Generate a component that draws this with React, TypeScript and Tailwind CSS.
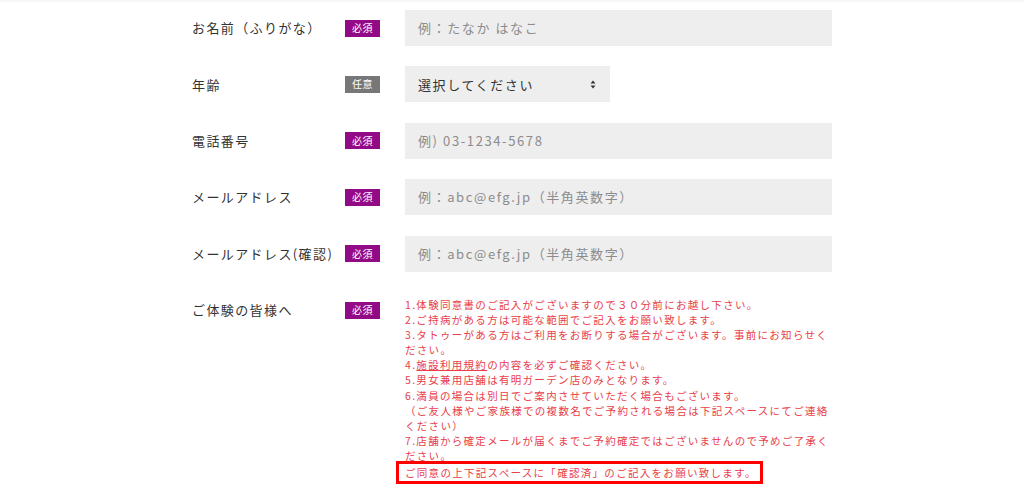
import React from "react";

const font = { fontFamily: '"Noto Sans CJK JP", "Noto Sans", sans-serif' };

function Badge({ required = true }: { required?: boolean }) {
  return (
    <div
      className={`w-[35px] h-[17px] flex items-center justify-center text-[10px] leading-none text-white tracking-[0.5px] ${
        required ? "bg-[#930a87]" : "bg-[#777777]"
      }`}
    >
      {required ? "必須" : "任意"}
    </div>
  );
}

function Row({
  label,
  required = true,
  children,
  alignTop = false,
}: {
  label: string;
  required?: boolean;
  children: React.ReactNode;
  alignTop?: boolean;
}) {
  return (
    <div className={`flex ${alignTop ? "items-start" : "items-center"}`}>
      <div
        className={`w-[153px] shrink-0 text-[13px] tracking-[1.4px] text-[#333333] ${
          alignTop ? "pt-[9px] leading-[18px]" : ""
        }`}
      >
        {label}
      </div>
      <div className={`w-[35px] shrink-0 ${alignTop ? "pt-[10px]" : ""}`}>
        <Badge required={required} />
      </div>
      <div className="ml-[25px] w-[427px]">{children}</div>
    </div>
  );
}

function Input({ placeholder }: { placeholder: string }) {
  return (
    <div className="h-[36px] w-full bg-[#eeeeee] flex items-center pl-[13px] text-[13px] tracking-[1.6px] text-[#8c8c8c]">
      {placeholder}
    </div>
  );
}

export default function App() {
  const notes = [
    "1.体験同意書のご記入がございますので３０分前にお越し下さい。",
    "2.ご持病がある方は可能な範囲でご記入をお願い致します。",
    "3.タトゥーがある方はご利用をお断りする場合がございます。事前にお知らせください。",
  ];
  return (
    <div style={font} className="w-[1024px] h-[492px] bg-white overflow-hidden">
      <div className="h-[3px] bg-gradient-to-b from-[#f3f3f3] to-white" />
      <div className="w-[640px] mx-auto pt-[7px] flex flex-col gap-[20.4px]">
        <Row label="お名前（ふりがな）">
          <Input placeholder="例：たなか はなこ" />
        </Row>
        <Row label="年齢" required={false}>
          <div className="h-[36px] w-[205px] bg-[#eeeeee] flex items-center justify-between pl-[13px] pr-[12px] text-[13px] tracking-[1.6px] text-[#333333]">
            <span>選択してください</span>
            <svg width="6" height="9" viewBox="0 0 6 9" className="mr-[2px]">
              <path d="M3 0.5 L5.5 3.5 H0.5 Z" fill="#333" />
              <path d="M3 8.5 L5.5 5.5 H0.5 Z" fill="#333" />
            </svg>
          </div>
        </Row>
        <Row label="電話番号">
          <Input placeholder="例) 03-1234-5678" />
        </Row>
        <Row label="メールアドレス">
          <Input placeholder="例：abc@efg.jp（半角英数字）" />
        </Row>
        <Row label="メールアドレス(確認)">
          <Input placeholder="例：abc@efg.jp（半角英数字）" />
        </Row>
        <Row label="ご体験の皆様へ" alignTop>
          <div className="pt-[5px] text-[10.5px] leading-[15.1px] tracking-[1.3px] text-[#e8404a]">
            {notes.map((n) => (
              <p key={n}>{n}</p>
            ))}
            <p>
              4.<span className="underline">施設利用規約</span>の内容を必ずご確認ください。
            </p>
            <p>5.男女兼用店舗は有明ガーデン店のみとなります。</p>
            <p>6.満員の場合は別日でご案内させていただく場合もございます。</p>
            <p>（ご友人様やご家族様での複数名でご予約される場合は下記スペースにてご連絡ください）</p>
            <p>7.店舗から確定メールが届くまでご予約確定ではございませんので予めご了承ください。</p>
            <div className="ml-[-9px] mt-[-2px] w-[367px] border-[3px] border-[#ff0000] pl-[6px] py-[1px] leading-[15px]">
              ご同意の上下記スペースに「確認済」のご記入をお願い致します。
            </div>
          </div>
        </Row>
      </div>
    </div>
  );
}
